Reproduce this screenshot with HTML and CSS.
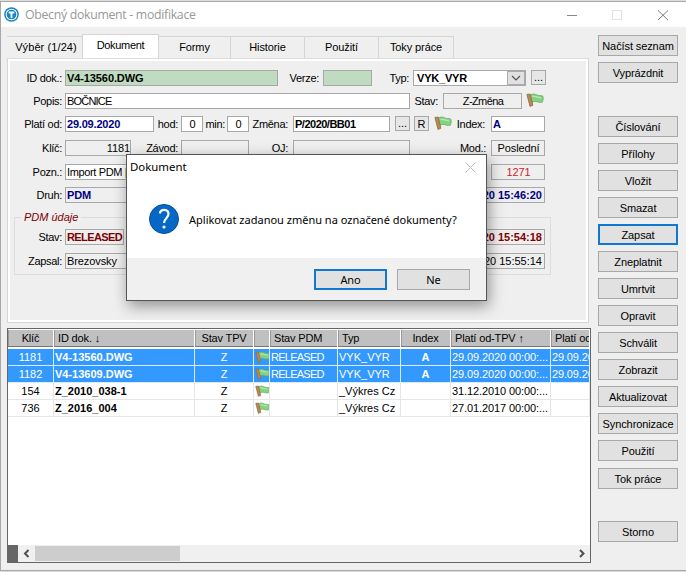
FILE: index.html
```html
<!DOCTYPE html>
<html lang="cs">
<head>
<meta charset="utf-8">
<title>Obecný dokument - modifikace</title>
<link rel="stylesheet" href="styles.css">
</head>
<body>
<svg class="defs" width="0" height="0">
  <symbol id="flag" viewBox="0 0 18 14">
    <path d="M4 2.200 C6.500 .4 9 .9 11 2 C13 3 15 2.200 16.800 3 C17.500 5 17.200 7 16.400 9.200 C13.500 10 11.500 8.600 9.500 8.400 C8 8.300 6.700 9 5.300 9.300 Z" fill="#86d183" stroke="#68ad68" stroke-width=".8"/>
    <path d="M6.500 3.600 C8.500 2.300 10.500 4.700 15 4.600" fill="none" stroke="#b4eaae" stroke-width="1.300"/>
    <path d="M.9 1.400 L4.200 1.100 L6.900 12.300 L4 13.400 Z" fill="#b48a55" stroke="#94683a" stroke-width=".8"/>
  </symbol>
</svg>
<div class="window">
  <header class="titlebar">
    <svg class="logo" viewBox="0 0 16 16"><circle cx="8" cy="8" r="7.800" fill="#1484c4"/><circle cx="8" cy="8" r="5.700" fill="#1484c4" stroke="#fff" stroke-width="1.100"/><path d="M5 5.900H11M8 5.900V11.800" stroke="#fff" stroke-width="2"/></svg>
    <h1>Obecný dokument - modifikace</h1>
    <svg class="winctl" width="103" height="12" viewBox="0 0 103 12"><path d="M0 6.500H10" stroke="#888"/><rect x="45.500" y="1.500" width="9" height="9" fill="none" stroke="#e2e2e2"/><path d="M91 1.500L101 11M101 1.500L91 11" stroke="#777"/></svg>
  </header>
  <div class="main">
    <div class="left">
      <nav class="tabs">
        <span class="tab t1">Výběr (1/24)</span><span class="tab active">Dokument</span><span class="tab t3">Formy</span><span class="tab t4">Historie</span><span class="tab t4">Použití</span><span class="tab t6">Toky práce</span>
      </nav>
      <section class="panel">
        <div class="row r1"><label>ID dok.:</label><b class="f green w213">V4-13560.DWG</b><label class="l41">Verze:</label><b class="f green w49"></b><label class="l37">Typ:</label><b class="f combo"><span>VYK_VYR</span><i><svg width="10" height="6" viewBox="0 0 10 6"><path d="M1 1L5 5L9 1" fill="none" stroke="#555" stroke-width="1.200"/></svg></i></b><span class="mini dots gap5">...</span></div>
        <div class="row"><label>Popis:</label><span class="f w345">BOČNICE</span><label class="l28">Stav:</label><span class="f ro state">Z-Změna</span><svg class="flag gap4"><use href="#flag"/></svg></div>
        <div class="row"><label>Platí od:</label><b class="f navy w89">29.09.2020</b><label class="l24">hod:</label><span class="f num">0</span><label class="l21">min:</label><span class="f num">0</span><label class="l40">Změna:</label><b class="f w97">P/2020/BB01</b><span class="mini dots gap5">...</span><span class="mini gap4">R</span><svg class="flag gap5"><use href="#flag"/></svg><label class="l34">Index:</label><b class="f navy w54">A</b></div>
        <div class="row r4"><label>Klíč:</label><span class="f ro key">1181</span><label class="l48">Závod:</label><span class="f ro w68">&nbsp;</span><label class="l40">OJ:</label><span class="f ro w117"></span><label class="l76">Mod.:</label><span class="f ro mid w54">Poslední</span></div>
        <div class="row r5"><label>Pozn.:</label><span class="f note">Import PDM [</span><span class="space"></span><span class="f ro mid red w54">1271</span></div>
        <div class="row"><label>Druh:</label><b class="f ro navy grow">PDM</b><b class="f ro navy end">29.09.2020 15:46:20</b></div>
        <fieldset>
          <legend>PDM údaje</legend>
          <div class="row"><label>Stav:</label><b class="f ro maroon w59">RELEASED</b><span class="space"></span><b class="f ro maroon end">29.09.2020 15:54:18</b></div>
          <div class="row r8"><label>Zapsal:</label><span class="f ro grow">Brezovsky</span><span class="f ro end">29.09.2020 15:55:14</span></div>
        </fieldset>
      </section>
      <section class="grid">
        <table>
          <colgroup><col class="c1"><col class="c2"><col class="c3"><col class="c4"><col class="c5"><col class="c6"><col class="c7"><col class="c8"><col class="c9"></colgroup>
          <thead><tr><th class="c">Klíč</th><th>ID dok. ↓</th><th class="c">Stav TPV</th><th></th><th>Stav PDM</th><th>Typ</th><th class="c">Index</th><th>Platí od-TPV ↑</th><th>Platí od-</th></tr></thead>
          <tbody>
            <tr class="sel"><td class="c">1181</td><td><b>V4-13560.DWG</b></td><td class="c">Z</td><td><svg class="flag"><use href="#flag"/></svg></td><td class="rel">RELEASED</td><td>VYK_VYR</td><td class="c"><b>A</b></td><td>29.09.2020 00:00:...</td><td>29.09.20</td></tr>
            <tr class="sel"><td class="c">1182</td><td><b>V4-13609.DWG</b></td><td class="c">Z</td><td><svg class="flag"><use href="#flag"/></svg></td><td class="rel">RELEASED</td><td>VYK_VYR</td><td class="c"><b>A</b></td><td>29.09.2020 00:00:...</td><td>29.09.20</td></tr>
            <tr><td class="c">154</td><td><b>Z_2010_038-1</b></td><td class="c">Z</td><td><svg class="flag"><use href="#flag"/></svg></td><td></td><td>_Výkres Cz</td><td></td><td>31.12.2010 00:00:...</td><td></td></tr>
            <tr><td class="c">736</td><td><b>Z_2016_004</b></td><td class="c">Z</td><td><svg class="flag"><use href="#flag"/></svg></td><td></td><td>_Výkres Cz</td><td></td><td>27.01.2017 00:00:...</td><td></td></tr>
          </tbody>
        </table>
        <div class="scroll"><i class="corner"></i><svg class="arr" viewBox="0 0 17 17"><path d="M10.500 5L7 8.500L10.500 12" fill="none" stroke="#505050" stroke-width="2"/></svg><i class="thumb"></i><svg class="arr right" viewBox="0 0 17 17"><path d="M7 5L10.500 8.500L7 12" fill="none" stroke="#505050" stroke-width="2"/></svg></div>
      </section>
    </div>
    <aside>
      <button>Načíst seznam</button><button>Vyprázdnit</button>
      <button class="sep">Číslování</button><button>Přílohy</button><button>Vložit</button><button>Smazat</button><button class="focus">Zapsat</button><button>Zneplatnit</button><button>Umrtvit</button><button>Opravit</button><button>Schválit</button><button>Zobrazit</button><button>Aktualizovat</button><button>Synchronizace</button><button>Použití</button><button class="tok">Tok práce</button>
      <button class="storno">Storno</button>
    </aside>
  </div>
</div>
<div class="dialog">
  <div class="dtitle"><span>Dokument</span><svg width="11" height="11" viewBox="0 0 11 11"><path d="M.5 .5L10.500 10.500M10.500 .5L.5 10.500" stroke="#bbb"/></svg></div>
  <div class="dbody"><svg width="30" height="30" viewBox="0 0 30 30"><circle cx="15" cy="15" r="14.500" fill="#0568c6" stroke="#084f96"/><path d="M10.800 9.500C11.500 4.600 19.500 4.700 19.500 10C19.500 14 15 14.500 15 19" fill="none" stroke="#fff" stroke-width="2.200"/><circle cx="15" cy="23" r="1.600" fill="#fff"/></svg><p>Aplikovat zadanou změnu na označené dokumenty?</p></div>
  <div class="dfoot"><button class="focus">Ano</button><button>Ne</button></div>
</div>
</body>
</html>
```
FILE: styles.css
```css
* { box-sizing: border-box; }
body { margin: 0; width: 686px; height: 572px; overflow: hidden; background: #ddd; font: 11px/14px "Liberation Sans", sans-serif; color: #000; }
.defs { position: absolute; }
.window { margin-top: 1px; height: 570px; background: #efefef; border: solid #a8a8a8; border-width: 1px 0 1px 1px; }
.titlebar { height: 25px; background: #fff; display: flex; align-items: center; padding-left: 3px; }
.logo { width: 15px; height: 15px; }
h1 { margin: 0 auto 0 6px; font: 12.3px/18px "Open Sans", sans-serif; color: #999; letter-spacing: -.3px; }
.winctl { margin-right: 16px; }
.main { display: flex; padding-left: 6px; }
.left { width: 584px; padding-top: 7px; }
.tabs { display: flex; align-items: flex-end; height: 24px; }
.tab { height: 22px; border: 1px solid #d5d5d5; border-width: 1px 1px 0 0; text-align: center; line-height: 21px; width: 74px; letter-spacing: -.1px; }
.tab.t1 { width: 75px; border-right: 0; padding-left: 3px; letter-spacing: 0.1px; }
.tab.active { height: 24px; width: 77px; background: #fff; border-left-width: 1px; line-height: 21px; letter-spacing: -.3px; }
.tab.t3 { width: 72px; }
.tab.t6 { width: 75px; }
.panel { width: 582px; height: 265px; border: 1px solid #d5d5d5; border-top-color: #ddd; box-shadow: inset 0 0 0 2px #fff; padding: 11px 43px 0 6px; }
.row { display: flex; height: 16px; margin-bottom: 7px; }
.row.r4 { margin: 8px 0; }
label { width: 48px; margin-right: 3px; text-align: right; line-height: 16px; white-space: nowrap; flex: none; letter-spacing: -.3px; display: flex; justify-content: flex-end; }
.f { height: 16px; border: 1px solid #a8a8a8; background: #fff; padding-left: 1px; line-height: 15px; white-space: nowrap; flex: none; overflow: hidden; letter-spacing: -.1px; }
.ro { background: #efefef; }
.green { background: #c0dcc0; }
.navy { color: #000080; }
.maroon { color: #800000; }
.red { color: #d42027; }
.mid { text-align: center; }
.f.grow { flex: 1; }
.note { width: 75px; letter-spacing: -.35px; }
.w213 { width: 213px; } .w49 { width: 49px; } .w345 { width: 345px; letter-spacing: -.8px; } .w89 { width: 89px; letter-spacing: -.2px; } .w97 { width: 97px; letter-spacing: -.5px; }
.w54 { width: 54px; } .w68 { width: 68px; } .w117 { width: 117px; } .w59 { width: 59px; letter-spacing: -.6px; }
.l41 { width: 41px; margin-right: 4px; } .l37 { width: 37px; margin-right: 4px; } .l28 { width: 28px; margin-right: 5px; }
.l24 { width: 24px; } .l21 { width: 22px; margin-right: 2px; } .l40 { width: 39px; margin-right: 5px; } .l34 { width: 33px; margin-right: 6px; }
.l48 { width: 47px; } .l76 { width: 76px; margin-right: 5px; }
.combo { width: 113px; display: flex; justify-content: space-between; padding-left: 3px; letter-spacing: -.2px; }
.combo i { width: 18px; border: 1px solid #aaa; background: #e1e1e1; display: flex; align-items: center; justify-content: center; }
.state { width: 79px; text-align: center; letter-spacing: -.6px; }
.num { width: 22px; text-align: center; }
.key { width: 66px; text-align: right; }
.end { width: 128px; text-align: right; padding-right: 2px; letter-spacing: 0; }
.mini { width: 15px; height: 15px; border: 1px solid #a8a8a8; text-align: center; line-height: 14px; background: #e6e6e6; flex: none; }
.mini.dots { line-height: 13px; }
.gap5 { margin-left: 5px; } .gap4 { margin-left: 4px; }
.flag { width: 18px; height: 14px; flex: none; }
.space { flex: 1; }
fieldset { margin: 0 -6px 0 0; border: 1px solid #dcdcdc; height: 65px; padding: 5px 5px 0 0; min-width: 0; }
legend { margin-left: 6px; padding: 0 3px; font-style: italic; color: #800000; line-height: 14px; }
fieldset label { width: 47px; }
.row.r8 { margin-top: 8px; }
.grid { margin-top: 5px; width: 584px; height: 235px; border: 1px solid #666; background: #fff; display: flex; flex-direction: column; justify-content: space-between; overflow: hidden; }
table { border-collapse: separate; border-spacing: 0; table-layout: fixed; width: 582px; }
.c1 { width: 46px; } .c2 { width: 141px; } .c3 { width: 59px; } .c4 { width: 16px; } .c5 { width: 68px; } .c6 { width: 63px; } .c7 { width: 50px; } .c8 { width: 100px; } .c9 { width: 39px; }
th { height: 20px; padding: 0 0 0 4px; background: #c0c0c0; border: solid #fff; border-width: 1px 1px 2px 0; box-shadow: inset 0 -1px #777, inset 1px 0 #999; font-weight: normal; text-align: left; line-height: 15px; white-space: nowrap; overflow: hidden; letter-spacing: -.15px; }
td { height: 17px; padding: 0 0 0 1px; border: solid #e6e6e6; border-width: 0 1px 1px 0; line-height: 16px; white-space: nowrap; overflow: hidden; }
th:last-child, td:last-child { letter-spacing: -.15px; }
td.rel { letter-spacing: -.75px; }
td:nth-child(8) { letter-spacing: -.1px; }
td .flag { width: 15px; display: block; }
th.c, td.c { text-align: center; padding: 0; }
.sel td { background: #3399ff; color: #fff; border-color: #d8ebff; }
.scroll { display: flex; height: 17px; background: #f0f0f0; }
.corner { width: 10px; background: #666; }
.arr { width: 17px; height: 17px; }
.arr.right { margin-left: auto; }
.thumb { width: 145px; margin: 1px 0; background: #cdcdcd; }
aside { padding: 8px 0 0 7px; display: flex; flex-direction: column; gap: 6px; }
button { width: 80px; height: 21px; border: 1px solid #a8a8a8; background: #e1e1e1; padding: 0; font: 11px/18px "Liberation Sans", sans-serif; color: #000; white-space: nowrap; letter-spacing: -.1px; }
.focus { border: 2px solid #1079cf; }
.sep { margin-top: 27px; } .tok { margin-top: 1px; } .storno { margin-top: 26px; }
.dialog { position: absolute; left: 126px; top: 154px; width: 361px; height: 147px; border: 1px solid #555; background: #fff; box-shadow: 2px 5px 14px rgba(0,0,0,.4); font-family: "Noto Sans", sans-serif; }
.dtitle { display: flex; justify-content: space-between; height: 26px; padding: 3px 10px 0 3px; font-size: 11.4px; line-height: 17px; }
.dtitle svg { margin-top: 4px; }
.dbody { display: flex; height: 77px; padding: 23px 0 0 22px; }
.dbody p { margin: 8px 0 0 10px; line-height: 16px; white-space: nowrap; font-size: 11px; }
.dfoot { background: #f0f0f0; height: 42px; display: flex; justify-content: flex-end; gap: 10px; padding: 11px 16px 0 0; }
.dfoot button { width: 73px; font-family: "Noto Sans", sans-serif; }
```
